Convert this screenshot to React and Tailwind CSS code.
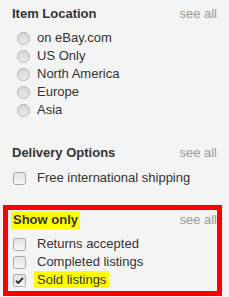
const itemLocations = ['on eBay.com', 'US Only', 'North America', 'Europe', 'Asia'];
const showOnly = [
  { label: 'Returns accepted', checked: false },
  { label: 'Completed listings', checked: false },
  { label: 'Sold listings', checked: true, highlight: true },
];

const Radio = () => (
  <svg width="13" height="13" viewBox="0 0 13 13" className="shrink-0">
    <defs>
      <linearGradient id="rg" x1="0" y1="0" x2="0" y2="1">
        <stop offset="0" stopColor="#d4d4d4" />
        <stop offset="1" stopColor="#ececec" />
      </linearGradient>
    </defs>
    <circle cx="6.5" cy="6.5" r="6" fill="url(#rg)" stroke="#b4b4b4" strokeWidth="1" />
  </svg>
);

const Checkbox = ({ checked }) => (
  <svg width="13" height="13" viewBox="0 0 13 13" className="shrink-0">
    <defs>
      <linearGradient id="cg" x1="0" y1="0" x2="0" y2="1">
        <stop offset="0" stopColor="#e2e2e2" />
        <stop offset="1" stopColor="#f7f7f7" />
      </linearGradient>
    </defs>
    <rect x="0.5" y="0.5" width="12" height="12" rx="2" fill="url(#cg)" stroke="#a9a9a9" strokeWidth="1" />
    {checked && (
      <path d="M3 6.8 L5.3 9 L10 3.8" fill="none" stroke="#333" strokeWidth="2" strokeLinejoin="round" />
    )}
  </svg>
);

const Heading = ({ title, highlight }) => (
  <div className="flex items-center justify-between h-[18px]">
    <span className={highlight ? 'font-bold bg-[#ffff00] px-[2px] leading-[18px]' : 'font-bold leading-[18px]'}>
      {title}
    </span>
    <span className="text-[#9a9a9a]">see all</span>
  </div>
);

export default function App() {
  return (
    <div
      className="w-[229px] h-[297px] overflow-hidden bg-[#f4f4f4] text-[13px] text-[#333] leading-[18px]"
      style={{ fontFamily: '"Liberation Sans", Arial, sans-serif' }}
    >
      {/* Item Location */}
      <div className="pl-[12px] pr-[12px] pt-[5px]">
        <Heading title="Item Location" />
        <div className="mt-[6px]">
          {itemLocations.map((loc) => (
            <div key={loc} className="flex items-center h-[18px] pl-[5px]">
              <Radio />
              <span className="ml-[7px]">{loc}</span>
            </div>
          ))}
        </div>
      </div>

      {/* Delivery Options */}
      <div className="pl-[12px] pr-[12px] mt-[25px]">
        <Heading title="Delivery Options" />
        <div className="flex items-center h-[18px] mt-[7px] pl-[1px]">
          <Checkbox />
          <span className="ml-[11px]">Free international shipping</span>
        </div>
      </div>

      {/* Show only */}
      <div className="ml-[3px] w-[219px] mt-[18px] border-[5px] border-[#ff0000] pl-[3px] pt-[1px] pb-[2px]">
        <Heading title="Show only" highlight />
        <div className="mt-[6px]">
          {showOnly.map((item) => (
            <div key={item.label} className="flex items-center h-[18px] pl-[2px]">
              <Checkbox checked={item.checked} />
              <span className="ml-[11px]">
                {item.highlight ? (
                  <span className="bg-[#ffff00] -ml-[3px] px-[3px] py-[1px]">{item.label}</span>
                ) : (
                  item.label
                )}
              </span>
            </div>
          ))}
        </div>
      </div>
    </div>
  );
}
